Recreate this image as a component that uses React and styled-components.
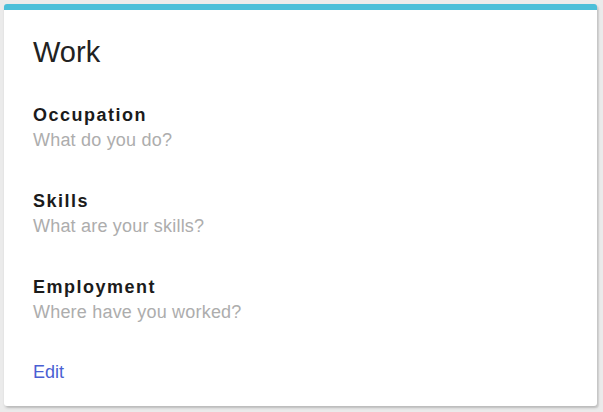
import React from "react";
import styled, { createGlobalStyle } from "styled-components";

const COLORS = {
  page: "#ebebeb",
  accent: "#4bbfd9",
  title: "#222222",
  label: "#1b1b1b",
  hint: "#adadad",
  link: "#4a5fd3",
};

const GlobalStyle = createGlobalStyle`
  html, body {
    margin: 0;
    padding: 0;
    background: ${COLORS.page};
    font-family: "Liberation Sans", Arial, sans-serif;
  }
`;

const Page = styled.div`
  padding: 4px 6px 6px 4px;
`;

const Card = styled.section`
  box-sizing: border-box;
  height: 402px;
  background: #fff;
  border-top: 6px solid ${COLORS.accent};
  border-radius: 3px;
  box-shadow: 1px 2px 3px rgba(0, 0, 0, 0.18), 2px 2px 0 rgba(0, 0, 0, 0.04);
  padding: 26px 29px 0;
  display: flex;
  flex-direction: column;
`;

const Title = styled.h1`
  margin: 0 0 35px;
  font-size: 29px;
  line-height: 32px;
  font-weight: 400;
  color: ${COLORS.title};
`;

const FieldList = styled.div`
  display: flex;
  flex-direction: column;
  gap: 37px;
`;

const Field = styled.div`
  display: flex;
  flex-direction: column;
`;

const Label = styled.h2`
  margin: 0 0 1px;
  font-size: 18px;
  line-height: 24px;
  font-weight: 700;
  letter-spacing: 1.5px;
  color: ${COLORS.label};
`;

const Hint = styled.p`
  margin: 0;
  font-size: 18px;
  line-height: 24px;
  letter-spacing: 0.2px;
  color: ${COLORS.hint};
`;

const EditLink = styled.a`
  margin-top: 36px;
  align-self: flex-start;
  font-size: 18px;
  line-height: 24px;
  color: ${COLORS.link};
  text-decoration: none;
  cursor: pointer;
`;

const fields = [
  { label: "Occupation", hint: "What do you do?" },
  { label: "Skills", hint: "What are your skills?" },
  { label: "Employment", hint: "Where have you worked?" },
];

const App = () => {
  return (
    <Page>
      <GlobalStyle />
      <Card>
        <Title>Work</Title>
        <FieldList>
          {fields.map((f) => (
            <Field key={f.label}>
              <Label>{f.label}</Label>
              <Hint>{f.hint}</Hint>
            </Field>
          ))}
        </FieldList>
        <EditLink>Edit</EditLink>
      </Card>
    </Page>
  );
};

export default App;
